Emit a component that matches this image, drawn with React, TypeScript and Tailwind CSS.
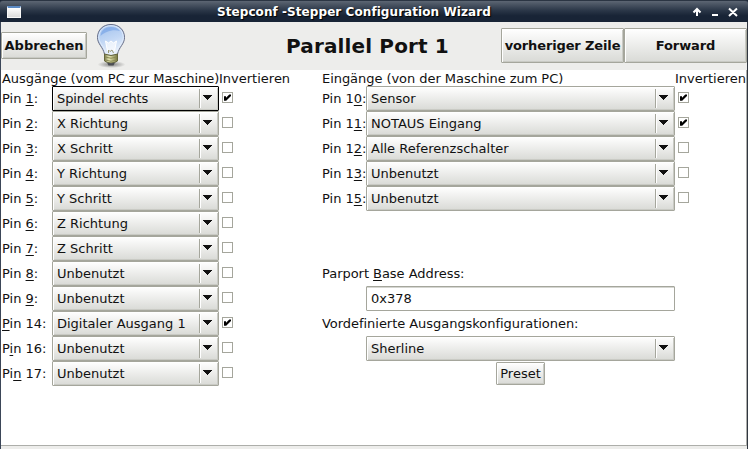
import React from "react";

type Pin = { label: [string, string, string]; value: string; checked?: boolean; focused?: boolean };

const outputs: Pin[] = [
  { label: ["Pin ", "1", ":"], value: "Spindel rechts", checked: true, focused: true },
  { label: ["Pin ", "2", ":"], value: "X Richtung" },
  { label: ["Pin ", "3", ":"], value: "X Schritt" },
  { label: ["Pin ", "4", ":"], value: "Y Richtung" },
  { label: ["Pin ", "5", ":"], value: "Y Schritt" },
  { label: ["Pin ", "6", ":"], value: "Z Richtung" },
  { label: ["Pin ", "7", ":"], value: "Z Schritt" },
  { label: ["Pin ", "8", ":"], value: "Unbenutzt" },
  { label: ["Pin ", "9", ":"], value: "Unbenutzt" },
  { label: ["", "P", "in 14:"], value: "Digitaler Ausgang 1", checked: true },
  { label: ["P", "i", "n 16:"], value: "Unbenutzt" },
  { label: ["Pi", "n", " 17:"], value: "Unbenutzt" },
];

const inputs: Pin[] = [
  { label: ["Pin 1", "0", ":"], value: "Sensor", checked: true },
  { label: ["Pin 1", "1", ":"], value: "NOTAUS Eingang", checked: true },
  { label: ["Pin 1", "2", ":"], value: "Alle Referenzschalter" },
  { label: ["Pin 1", "3", ":"], value: "Unbenutzt" },
  { label: ["Pin 1", "5", ":"], value: "Unbenutzt" },
];

function Label({ parts }: { parts: [string, string, string] }) {
  return (
    <span className="whitespace-pre">
      {parts[0]}
      <span className="underline decoration-1 underline-offset-2">{parts[1]}</span>
      {parts[2]}
    </span>
  );
}

function Combo({ value, focused }: { value: string; focused?: boolean }) {
  return (
    <button
      className={`flex h-[25px] w-full items-center rounded-[1px] border bg-linear-to-b from-white to-[#d9dad6] pl-1 text-left shadow-[inset_1px_1px_0_#ffffff,inset_-1px_-1px_0_#c9cac4] ${
        focused ? "border-black" : "border-[#a5a69c]"
      }`}
    >
      <span className={`flex-1 whitespace-nowrap ${value === "Spindel rechts" ? "tracking-[-0.1px]" : ""}`}>{value}</span>
      <span className="h-[19px] w-[2px] border-l border-r border-l-[#a5a69c] border-r-white" />
      <svg className="mr-[6px] mb-[2px] ml-[2px]" width="9" height="5" viewBox="0 0 9 5" shapeRendering="crispEdges">
        <path d="M0 0H9V1H8V2H7V3H6V4H5V5H4V4H3V3H2V2H1V1H0Z" fill="#111" />
      </svg>
    </button>
  );
}

function Check({ checked }: { checked?: boolean }) {
  return (
    <span className="ml-[3px] flex size-[11px] items-center justify-center border border-[#a5a69c] bg-white">
      {checked && (
        <svg width="9" height="9" viewBox="0 0 9 9">
          <path d="M1 3.2H3V4.8L6.3 1.5H8V3L3.2 7.8H1Z" fill="#000" />
        </svg>
      )}
    </span>
  );
}

function PinRow({ pin, wide }: { pin: Pin; wide?: boolean }) {
  return (
    <div className="flex h-[25px]">
      <div className={wide ? "w-[44px] leading-[25px]" : "w-[50px] leading-[25px]"}>
        <Label parts={pin.label} />
      </div>
      <div className={wide ? "w-[309px]" : "w-[167px]"}>
        <Combo value={pin.value} focused={pin.focused} />
      </div>
      <div className="pt-[6px]">
        <Check checked={pin.checked} />
      </div>
    </div>
  );
}

const buttonLook =
  "flex shrink-0 items-center justify-center whitespace-nowrap rounded-[1px] border border-[#a5a69c] bg-linear-to-b from-white to-[#d9dad6] shadow-[inset_1px_1px_0_#ffffff,inset_-1px_-1px_0_#c9cac4]";

function Bulb() {
  return (
    <svg className="ml-[8px] shrink-0" width="32" height="48" viewBox="0 0 32 48">
      <defs>
        <linearGradient id="glass" x1="0.3" y1="0" x2="0.6" y2="1">
          <stop offset="0" stopColor="#a3c2ed" />
          <stop offset="0.5" stopColor="#c3d8f5" />
          <stop offset="1" stopColor="#f1f5fb" />
        </linearGradient>
        <linearGradient id="brass" x1="0" x2="1">
          <stop offset="0" stopColor="#77784a" />
          <stop offset="0.35" stopColor="#e8e8b4" />
          <stop offset="1" stopColor="#74753e" />
        </linearGradient>
        <radialGradient id="shade">
          <stop offset="0" stopColor="#000" stopOpacity="0.45" />
          <stop offset="1" stopColor="#000" stopOpacity="0" />
        </radialGradient>
      </defs>
      <ellipse cx="16.5" cy="42.500" rx="14" ry="3.500" fill="url(#shade)" />
      <path d="M16 2.500C8 2.500 2.500 8 2.500 15.500C2.500 22 8 25 9.500 32C12 34 20 34 22.500 32C24 25 29.500 22 29.500 15.500C29.500 8 24 2.500 16 2.500Z" fill="url(#glass)" stroke="#646b85" />
      <path d="M16 3.700C9 3.700 3.800 8.500 3.700 15.500C4 21 9 24 10.700 31C13 32.500 19 32.500 21.300 31C23 24 28.300 21 28.300 15.500C28.200 8.500 23 3.700 16 3.700Z" fill="none" stroke="#e5effc" strokeWidth="0.8" />
      <path d="M5.500 14C6 8 11 5 16 5C20 5 23 6.500 25 9C17 7 10 10 5.500 14Z" fill="#6f9fe4" opacity="0.6" />
      <path d="M12.500 29L10.500 19L13.500 21L16 19L18.500 21L21.500 19L19.500 29" fill="#fff" fillOpacity="0.6" stroke="#fff" />
      <path d="M13.500 31V28L15 29.500L17 28L18.500 31" fill="none" stroke="#9a9a78" />
      <path d="M9.500 32Q16 35 22.500 32V39Q20 41 16 41Q12 41 9.500 39Z" fill="url(#brass)" stroke="#66673b" />
      <path d="M10 35Q16 37.500 22 35M10 38Q16 40.500 22 38" fill="none" stroke="#8b8b55" />
      <path d="M12 40.500Q16 42 20 40.500L18.500 43.500H13.500Z" fill="#4b4d52" />
    </svg>
  );
}

function TitleBar() {
  return (
    <header className="flex h-[22px] items-center rounded-t-[3px] border-t border-t-[#2b3543] bg-linear-to-b from-[#5d6673] via-[#2b3748] via-45% to-[#182436] to-70% text-white">
      <span className="ml-[7px] h-[12px] w-[14px] border border-[#f8f8f8] border-t-2 border-t-[#5b8ac4] bg-linear-to-b from-white to-[#dcdcdc]" />
      <h1 className="ml-[196px] w-[274px] pt-[2px] text-[12px] leading-[19px] font-bold tracking-[0.07px] whitespace-nowrap [text-shadow:1px_1px_1px_#000]">
        Stepconf -Stepper Configuration Wizard
      </h1>
      <svg className="ml-auto" width="56" height="21" viewBox="0 0 56 21" fill="none" stroke="#fff" strokeWidth="2">
        <path d="M5 15V9M1.500 11.500L5 8L8.500 11.500M20 14H26M37 7.500L45 15M45 7.500L37 15" />
      </svg>
    </header>
  );
}

export default function App() {
  return (
    <div className="h-[449px] w-[748px] overflow-hidden bg-[#1b2637] font-['DejaVu_Sans','Noto_Sans',sans-serif] text-[13px] text-[#111]">
      <TitleBar />
      <div className="flex h-[427px] flex-col border-r border-l border-l-[#3b4658] border-r-[#303640] bg-[#ededeb]">
        <div className="flex h-[48px] items-center font-bold">
          <button className={`${buttonLook} -mt-px h-[27px] w-[86px]`}>Abbrechen</button>
          <Bulb />
          <h2 className="ml-[159px] w-[215px] shrink-0 text-[20px] tracking-[0.14px] whitespace-nowrap">Parallel Port 1</h2>
          <button className={`${buttonLook} -mt-px h-[35px] w-[123px] tracking-[-0.13px]`}>vorheriger Zeile</button>
          <button className={`${buttonLook} -mt-px h-[35px] w-[123px] tracking-[-0.1px]`}>Forward</button>
        </div>
        <main className="flex h-[376px] border-r border-b border-[#adaeaa] bg-white pl-px">
          <section className="w-[320px]">
            <div className="flex h-[16px] leading-[17px] whitespace-nowrap">
              <span className="w-[217px] tracking-[-0.03px]">Ausgänge (vom PC zur Maschine)</span>
              <span>Invertieren</span>
            </div>
            {outputs.map((pin) => (
              <PinRow key={pin.label.join("")} pin={pin} />
            ))}
          </section>
          <section className="w-[424px]">
            <div className="flex h-[16px] leading-[17px] whitespace-nowrap">
              <span className="w-[353px] tracking-[-0.05px]">Eingänge (von der Maschine zum PC)</span>
              <span>Invertieren</span>
            </div>
            {inputs.map((pin) => (
              <PinRow key={pin.label.join("")} pin={pin} wide />
            ))}
            <div className="mt-[50px] h-[25px] leading-[25px] tracking-[-0.04px]">
              <Label parts={["Parport ", "B", "ase Address:"]} />
            </div>
            <input
              className="ml-[44px] block h-[25px] w-[309px] rounded-[1px] border border-[#a5a69c] bg-white px-1 shadow-[inset_0_1px_0_#d5d6d1]"
              defaultValue="0x378"
            />
            <div className="h-[25px] leading-[25px] tracking-[-0.04px]">Vordefinierte Ausgangskonfigurationen:</div>
            <div className="ml-[44px] w-[309px]">
              <Combo value="Sherline" />
            </div>
            <button className={`${buttonLook} mt-px ml-[174px] h-[23px] w-[49px]`}>Preset</button>
          </section>
        </main>
      </div>
    </div>
  );
}
